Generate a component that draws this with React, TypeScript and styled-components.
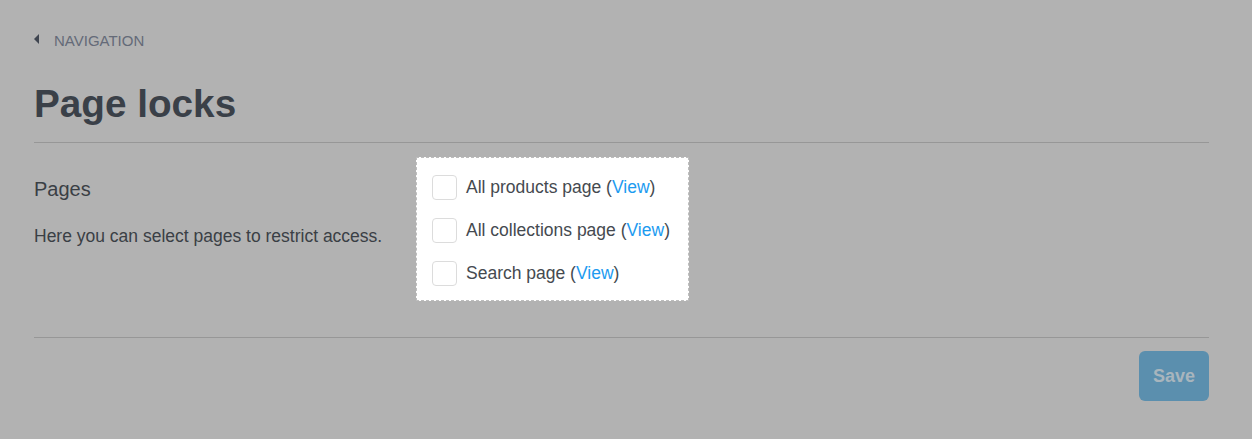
import styled, { createGlobalStyle } from 'styled-components';

const GlobalStyle = createGlobalStyle`
  html, body {
    margin: 0;
    padding: 0;
    background: #b2b2b2;
    font-family: "Liberation Sans", Arial, sans-serif;
  }
`;

const pages = ['All products page', 'All collections page', 'Search page'];

const App = () => {
  return (
    <>
      <GlobalStyle />
      <Page>
        <Breadcrumb href="#">
          <Caret />
          NAVIGATION
        </Breadcrumb>
        <Title>Page locks</Title>
        <Divider />
        <Section>
          <Aside>
            <SectionTitle>Pages</SectionTitle>
            <SectionText>Here you can select pages to restrict access.</SectionText>
          </Aside>
          <Highlight>
            {pages.map((label) => (
              <Option key={label}>
                <Box type="checkbox" />
                <span>
                  {label} (<ViewLink href="#">View</ViewLink>)
                </span>
              </Option>
            ))}
          </Highlight>
        </Section>
        <Divider />
        <Footer>
          <SaveButton>Save</SaveButton>
        </Footer>
      </Page>
    </>
  );
};

export default App;

const Page = styled.div`
  padding: 31px 43px 0 34px;
  height: 439px;
  box-sizing: border-box;
`;

const Breadcrumb = styled.a`
  display: flex;
  align-items: center;
  gap: 15px;
  height: 18px;
  font-size: 15px;
  color: #646a78;
  text-decoration: none;
`;

const Caret = styled.span`
  width: 0;
  height: 0;
  border-top: 5px solid transparent;
  border-bottom: 5px solid transparent;
  border-right: 5px solid #3f4550;
  margin-top: -2px;
`;

const Title = styled.h1`
  margin: 32px 0 15px;
  font-size: 38.7px;
  line-height: 46px;
  font-weight: 700;
  color: #3a4048;
`;

const Divider = styled.hr`
  margin: 0;
  border: 0;
  border-top: 1px solid #979797;
`;

const Section = styled.div`
  display: flex;
  padding-top: 14px;
  height: 194px;
  box-sizing: border-box;
`;

const Aside = styled.div`
  width: 382px;
  padding-top: 21px;
`;

const SectionTitle = styled.h2`
  margin: 0;
  font-size: 20px;
  line-height: 22px;
  font-weight: 400;
  color: #3a3f45;
`;

const SectionText = styled.p`
  margin: 26px 0 0;
  font-size: 17.5px;
  line-height: 20px;
  color: #3a3f45;
`;

const Highlight = styled.div`
  display: flex;
  flex-direction: column;
  gap: 18px;
  align-self: flex-start;
  background: #fff;
  border: 1px dashed #bdbdbd;
  padding: 17px 18px 14px 15px;
`;

const Option = styled.label`
  display: flex;
  align-items: center;
  gap: 9px;
  font-size: 17.5px;
  line-height: 25px;
  color: #454a50;
`;

const Box = styled.input`
  appearance: none;
  margin: 0;
  width: 25px;
  height: 25px;
  border: 1px solid #dcdcdc;
  border-radius: 4px;
  background: #fff;
  box-sizing: border-box;
`;

const ViewLink = styled.a`
  color: #1d9bf0;
  text-decoration: none;
`;

const Footer = styled.div`
  display: flex;
  justify-content: flex-end;
  padding-top: 13px;
`;

const SaveButton = styled.button`
  width: 70px;
  height: 50px;
  border: 0;
  border-radius: 6px;
  background: #5b8fae;
  color: #a8b5bd;
  font-family: inherit;
  font-size: 18px;
  font-weight: 700;
`;
